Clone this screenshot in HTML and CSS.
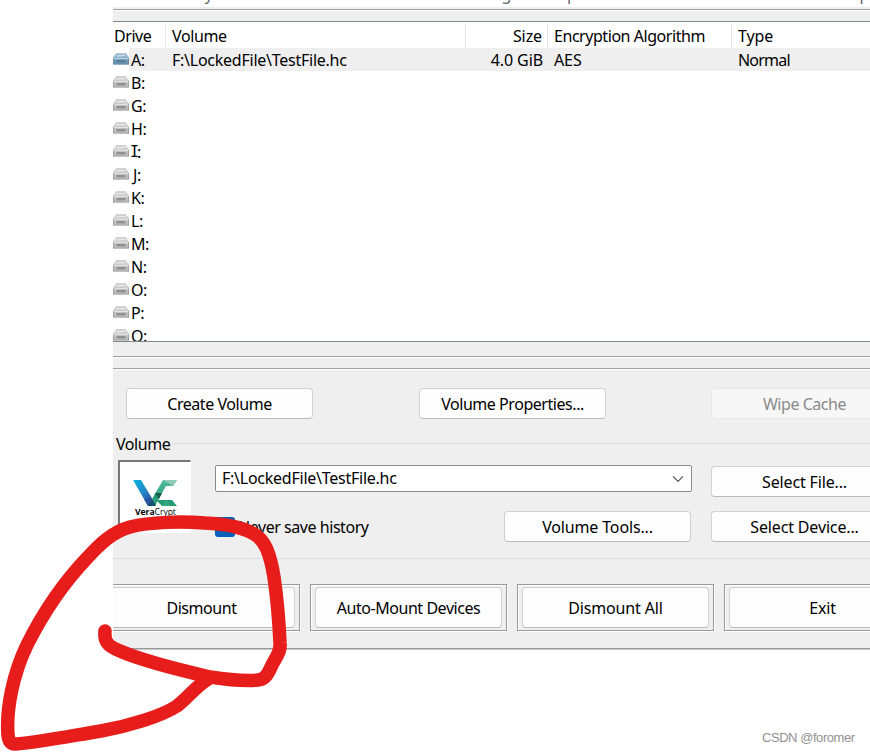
FILE: index.html
```html
<!DOCTYPE html>
<html lang="en">
<head>
<meta charset="utf-8">
<title>VeraCrypt</title>
<link rel="stylesheet" href="styles.css">
</head>
<body>
<svg class="defs" width="0" height="0">
  <defs>
    <linearGradient id="body" x1="0" y1="0" x2="0" y2="1"><stop offset="0" stop-color="#fff" stop-opacity=".6"/><stop offset="1" stop-color="#777" stop-opacity=".15"/></linearGradient>
    <symbol id="drive" viewBox="0 0 16 12">
      <path d="M2.6.5h10.8L16 5v6.5H0V5z" fill="currentColor"/>
      <path d="M2.6.5h10.8L16 5v6.5H0V5z" fill="url(#body)"/>
      <path d="M.5 5.5h15M4 3.2l8-1" stroke="#fff" opacity=".5"/>
      <path d="M.5 5v6M15.5 5v6M0 11.2h16M3 .9h10" fill="none" stroke="#666" stroke-width=".8" opacity=".4"/>
      <path d="M3.5 7h9v2.4h-9z" fill="#444" opacity=".38"/>
    </symbol>
  </defs>
</svg>
<main class="window">
  <nav class="menu"><span class="m1">Volumes</span><span class="m2">System</span><span class="m3">Favorites</span><span class="m4">Tools</span><span class="m5">Settings</span><span class="m6">Help</span><span class="m7">Homepage</span></nav>
  <div class="band"></div>
  <section class="list">
    <div class="row head"><span class="c1">Drive</span><span class="c2 wide">Volume</span><span class="c3 wide">Size</span><span class="c4">Encryption Algorithm</span><span class="c5 wide">Type</span></div>
    <div class="row sel"><span class="c1"><svg class="ico blue"><use href="#drive"/></svg>A:</span><span class="c2 path">F:\LockedFile\TestFile.hc</span><span class="c3 wide">4.0 GiB</span><span class="c4 wide">AES</span><span class="c5 tight">Normal</span></div>
    <div class="row"><svg class="ico"><use href="#drive"/></svg>B:</div>
    <div class="row"><svg class="ico"><use href="#drive"/></svg>G:</div>
    <div class="row"><svg class="ico"><use href="#drive"/></svg>H:</div>
    <div class="row"><svg class="ico"><use href="#drive"/></svg><span class="serif-i">I</span>:</div>
    <div class="row"><svg class="ico"><use href="#drive"/></svg><span class="jay">J</span>:</div>
    <div class="row"><svg class="ico"><use href="#drive"/></svg>K:</div>
    <div class="row"><svg class="ico"><use href="#drive"/></svg>L:</div>
    <div class="row"><svg class="ico"><use href="#drive"/></svg>M:</div>
    <div class="row"><svg class="ico"><use href="#drive"/></svg>N:</div>
    <div class="row"><svg class="ico"><use href="#drive"/></svg>O:</div>
    <div class="row"><svg class="ico"><use href="#drive"/></svg>P:</div>
    <div class="row"><svg class="ico"><use href="#drive"/></svg>Q:</div>
  </section>
  <div class="gap"></div>
  <div class="gap2"></div>
  <section class="actions">
    <button class="btn">Create Volume</button>
    <button class="btn">Volume Properties...</button>
    <button class="btn off" disabled>Wipe Cache</button>
  </section>
  <section class="group">
    <div class="legend"><span>Volume</span></div>
    <div class="volume">
      <div class="logo">
        <svg width="70" height="70" viewBox="0 0 70 70">
          <defs><linearGradient id="v" x1="0" y1="0" x2=".8" y2="1"><stop offset="0" stop-color="#08b3df"/><stop offset=".55" stop-color="#2588c7"/><stop offset="1" stop-color="#28489c"/></linearGradient>
          <linearGradient id="c" x1="0" y1="0" x2="0" y2="1"><stop offset="0" stop-color="#52b99b"/><stop offset="1" stop-color="#239a72"/></linearGradient></defs>
          <path d="M13 19h8l12 20-5 6z" fill="url(#v)"/>
          <path d="M28 45l8-14 7-12h14l-4 6h-7l-8 14-3 6z" fill="url(#c)"/>
          <path d="M35 32h7l-4 7h14l5 6H42l-8-8z" fill="#269975"/>
          <path d="M43 19h14l-4 6z" fill="#8fcdb8"/>
          <path d="M35 32h7l-3 6z" fill="#195e4e"/>
          <path d="M24 38l4 7h7l-4-8z" fill="#28559e"/>
          <path d="M28 45l4-7 4 7z" fill="#174f72"/>
          <path d="M42 45l4-6 4 6z" fill="#32ad83"/>
        </svg>
        <div class="brand"><b>Vera</b>Crypt</div>
      </div>
      <div class="fields">
        <div class="combo"><span class="path">F:\LockedFile\TestFile.hc</span><svg width="12" height="8"><path d="M1 1.3l5 5 5-5" fill="none" stroke="#555" stroke-width="1.2"/></svg></div>
        <div class="options">
          <label class="check"><i></i><span>Never save history</span></label>
          <button class="btn path">Volume Tools...</button>
        </div>
      </div>
      <div class="picks">
        <button class="btn path">Select File...</button>
        <button class="btn path">Select Device...</button>
      </div>
    </div>
  </section>
  <footer class="bottom">
    <div class="frame"><button class="btn">Dismount</button></div>
    <div class="frame"><button class="btn">Auto-Mount Devices</button></div>
    <div class="frame"><button class="btn path">Dismount All</button></div>
    <div class="frame"><button class="btn path">Exit</button></div>
  </footer>
</main>
<svg class="ink" width="870" height="752"><path d="M105 631C104 641 107 646 120 651C143 661 184 671 210 677C230 680 248 681 258 680C267 679 269 671 273 663C277 656 281 651 280 643C279 620 277 598 274 577C270 553 265 540 254 534C244 528 226 524 205 523C180 521 150 522 130 527C112 532 99 545 88 557C64 582 44 611 27 645C13 674 6 709 8 735Q9 745 16 744C34 743 65 737 101 731C129 726 162 716 177 706C189 697 195 687 208 679"/></svg>
<div class="mark">CSDN @foromer</div>
</body>
</html>
```
FILE: styles.css
```css
* { box-sizing: border-box; }
body { margin: 0; width: 870px; height: 752px; overflow: hidden; position: relative; background: #fff; font: 16px/23px "Noto Sans", sans-serif; letter-spacing: -.45px; color: #000; }
.defs, .ink { position: absolute; left: 0; top: 0; }
.window { margin-left: 113px; width: 757px; height: 650px; overflow: hidden; background: #efefef; border-bottom: 1px solid #c8c8c8; box-shadow: inset 0 -1px #999; }
.menu { height: 7px; background: #fff; overflow: hidden; color: #666; line-height: 24px; display: flex; letter-spacing: 0; }
.menu span { margin-top: -18px; flex: none; }
.m1 { width: 70px; padding-left: 3px; }
.m2 { width: 83px; padding-left: 13px; }
.m3 { width: 112px; }
.m4 { width: 80px; }
.m5 { width: 84px; }
.m6 { width: 272px; }
.band { height: 13px; margin-top: 2px; border-top: 1px solid #a0a0a0; border-bottom: 1px solid #828790; box-shadow: inset 0 1px #fff; }
.list { height: 320px; overflow: hidden; background: #fff; border-bottom: 1px solid #828790; }
.row { height: 23px; display: flex; align-items: center; flex: none; line-height: 23px; padding-top: 2px; }
.head { height: 26px; align-items: stretch; padding-top: 1px; line-height: 27px; }
.c1 { width: 53px; flex: none; display: flex; align-items: center; }
.head .c1 { padding: 1px 0 0 1px; }
.c2 { width: 300px; padding-left: 6px; }
.c3 { width: 82px; padding-right: 5px; text-align: right; }
.c4 { width: 184px; padding-left: 6px; }
.c5 { padding-left: 6px; }
.row .wide { letter-spacing: -.1px; }
.row .c2.wide { letter-spacing: -.4px; }
.row .tight { letter-spacing: -.8px; }
.path { letter-spacing: -.25px; }
.head .c1, .head .c2, .head .c3, .head .c4 { border-right: 1px solid #e5e5e5; }
.sel { background: linear-gradient(90deg, #fff 16px, #efefef 16px); }
.ico { width: 16px; height: 12px; margin: 0 2px 4px 0; color: #cacaca; flex: none; }
.blue { color: #5c9cca; }
.serif-i { font-family: "DejaVu Sans Mono", monospace; font-size: 15px; width: 8px; margin: 0 -1px 0 -1px; }
.jay { padding-left: 2px; }
.gap { height: 15px; border-bottom: 1px solid #a0a0a0; box-shadow: 0 1px #fff; }
.gap2 { height: 12px; border-bottom: 1px solid #a0a0a0; box-shadow: 0 1px #fff; }
.actions { padding: 19px 0 0 13px; display: flex; gap: 106px; height: 63px; }
.btn { font: inherit; letter-spacing: -.45px; color: #000; width: 187px; height: 31px; padding: 2px 0 0; flex: none; background: #fdfdfd; border: 1px solid #d0d0d0; border-bottom-color: #bababa; border-radius: 4px; }
.btn.path { letter-spacing: -.15px; }
.btn.off { color: #8a8a8a; background: #f7f7f7; border-color: #e7e7e7; margin-left: -1px; }
.group { height: 127px; border-bottom: 1px solid #dcdcdc; }
.legend { display: flex; align-items: center; height: 23px; padding-left: 3px; gap: 2px; }
.legend span { padding-top: 2px; }
.legend::after { content: ""; height: 1px; background: #dcdcdc; flex: 1; }
.volume { display: flex; padding: 1px 0 0 5px; }
.logo { flex: none; margin-top: 4px; width: 73px; height: 73px; border: 1px solid #a0a0a0; border-color: #777 #fff #fff #777; border-left-width: 2px; border-top-width: 2px; background: #fff; position: relative; overflow: hidden; }
.logo svg { display: block; margin-top: -1px; }
.brand { position: absolute; left: 15px; top: 43px; font: 8.6px/14px "Open Sans", sans-serif; letter-spacing: -.05px; }
.fields { flex: none; margin: 9px 0 0 24px; width: 477px; }
.combo { height: 27px; background: #fff; border: 1px solid #8a8a8a; border-radius: 2px; display: flex; align-items: center; justify-content: space-between; padding: 0 7px 0 6px; }
.options { display: flex; justify-content: space-between; align-items: center; margin-top: 19px; padding-right: 1px; }
.check { display: flex; align-items: center; gap: 3px; }
.check span { padding-top: 2px; letter-spacing: -.45px; }
.check i { width: 20px; height: 20px; border-radius: 3px; background: #005fb8; }
.picks { flex: none; margin: 10px 0 0 19px; display: flex; flex-direction: column; gap: 14px; }
.bottom { margin: 25px 0 0 -10px; display: flex; gap: 10px; }
.frame { width: 197px; height: 47px; flex: none; border: 1px solid #999; padding: 2px 4px; box-shadow: inset 1px 1px #fff, 1px 1px #fff; }
.frame .btn { height: 41px; display: block; }
.ink path { fill: none; stroke: #e71d1b; stroke-width: 13.5px; stroke-linecap: round; stroke-linejoin: round; }
.mark { position: absolute; left: 762px; top: 728px; font: 13px/20px "Liberation Sans", sans-serif; letter-spacing: -.45px; color: #929292; }
```
